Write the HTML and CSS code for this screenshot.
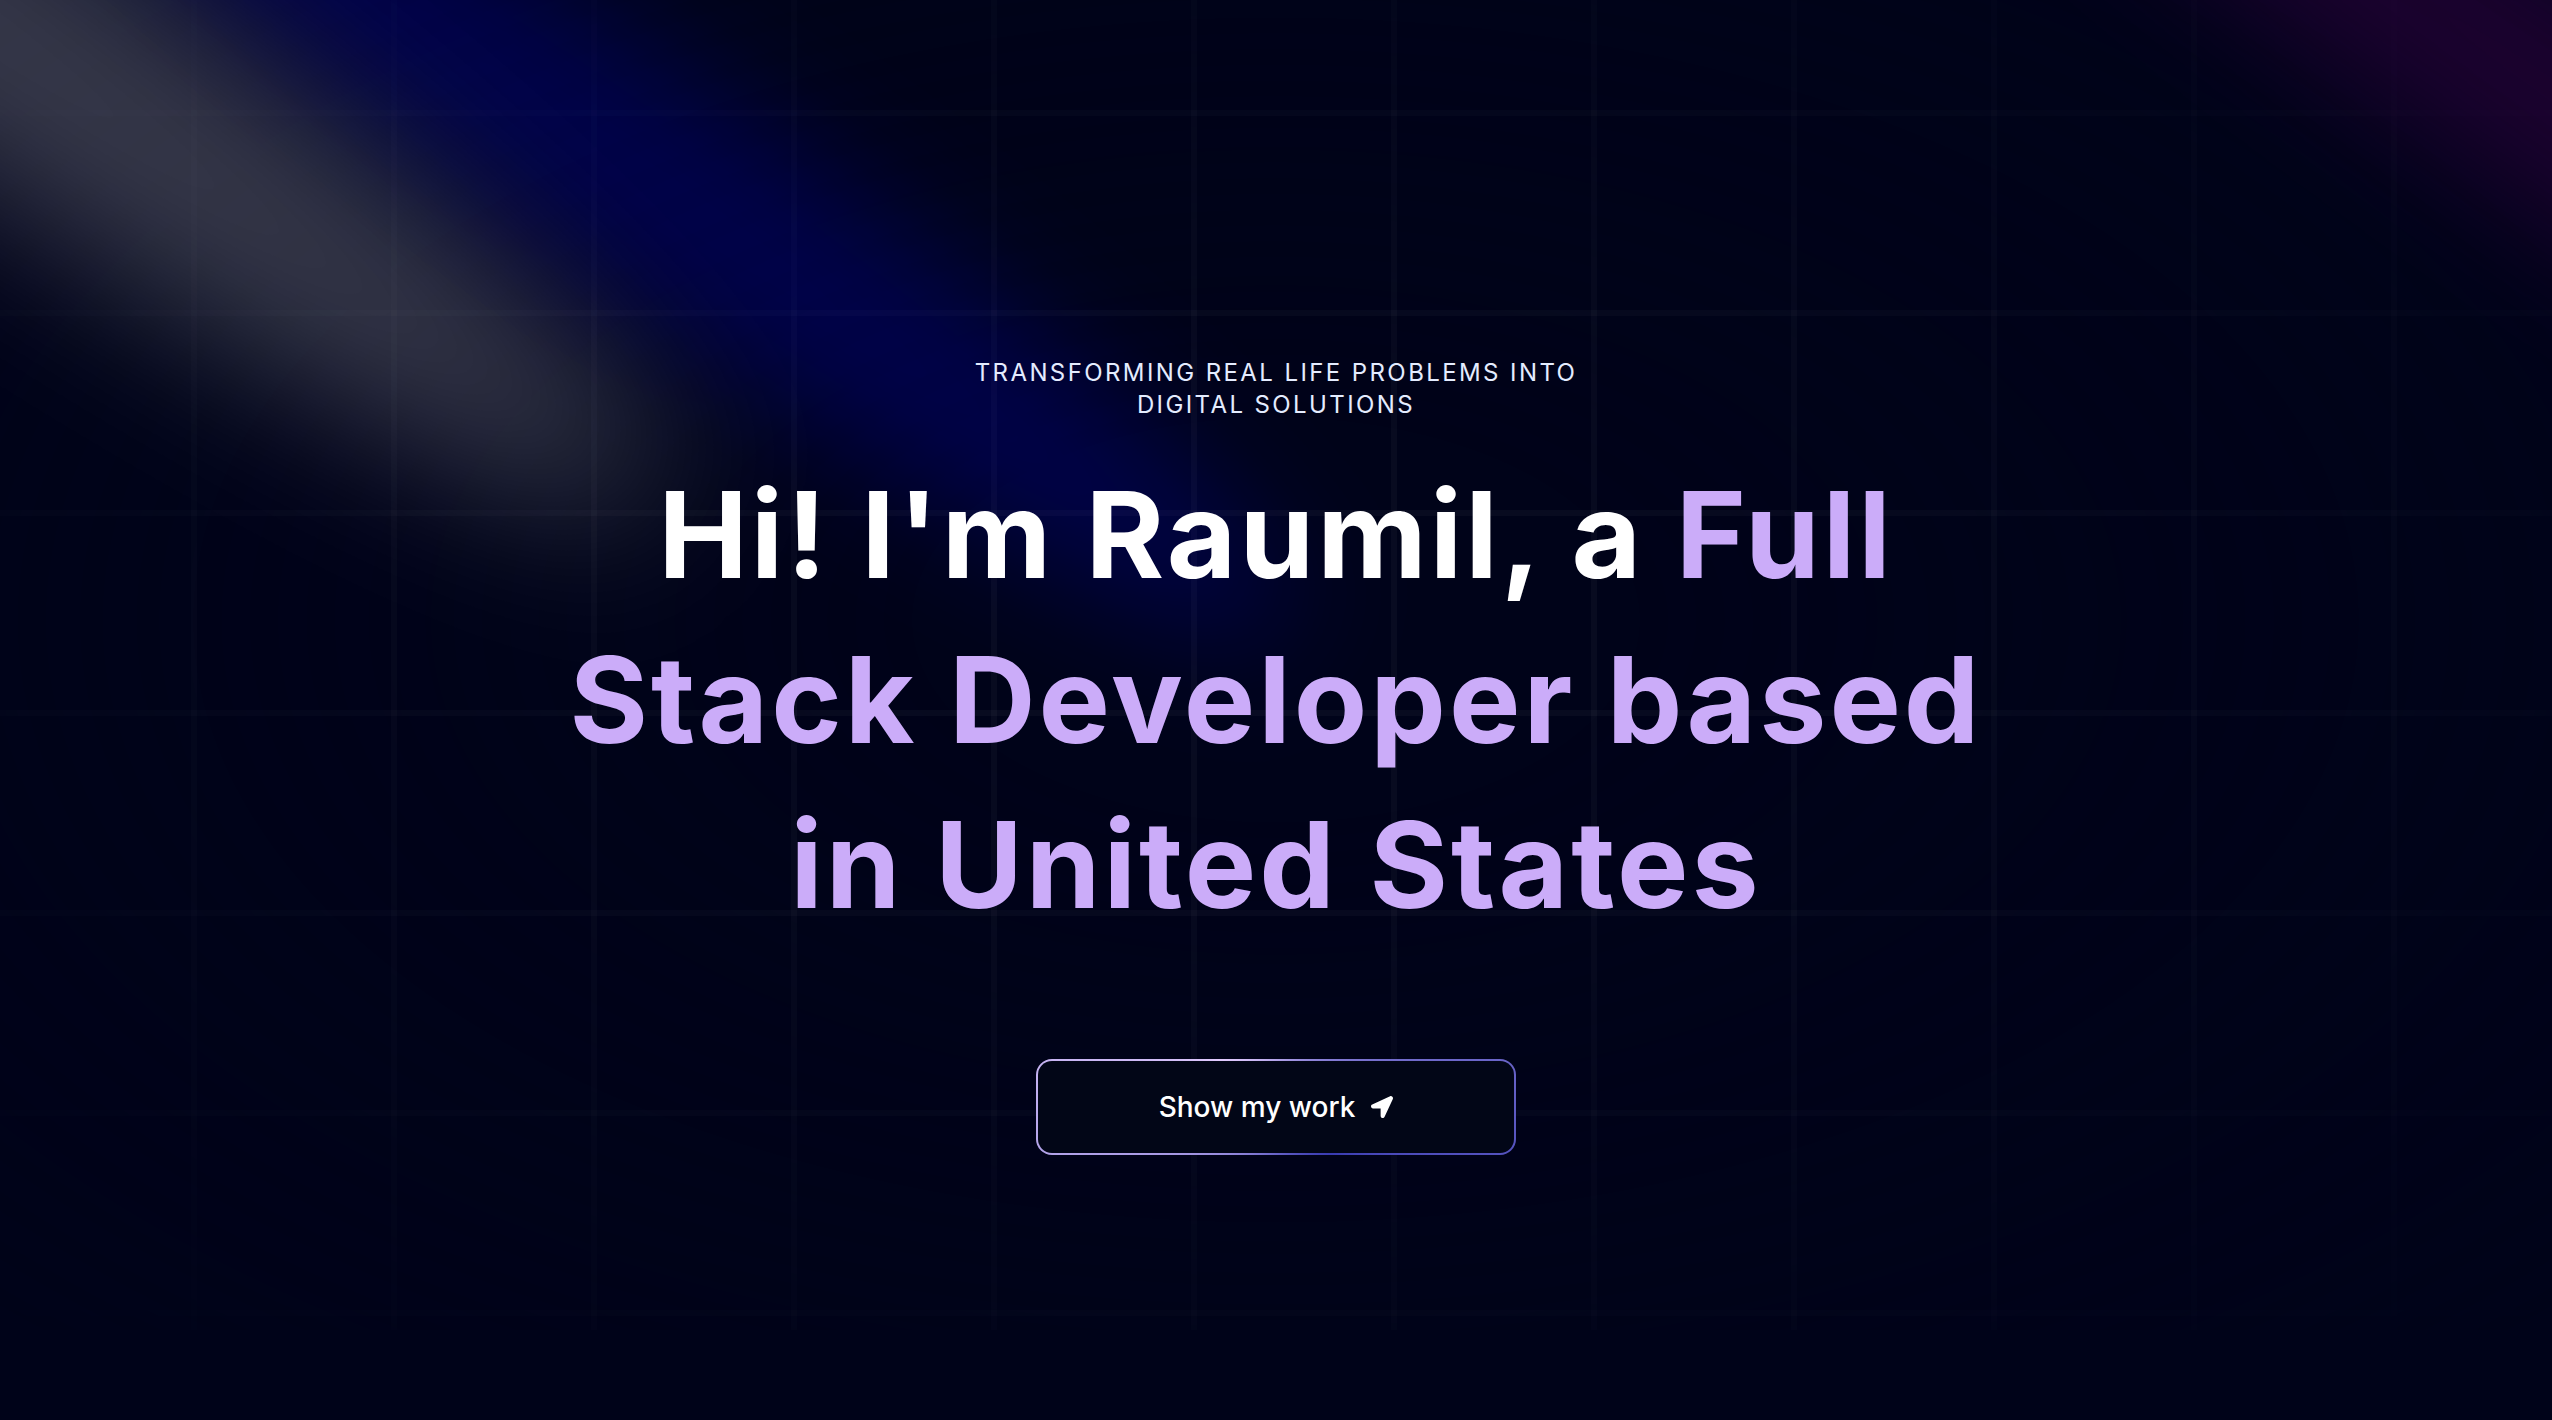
FILE: index.html
```html
<!DOCTYPE html>
<html lang="en">
<head>
    <meta charset="UTF-8">
    <meta name="viewport" content="width=device-width, initial-scale=1.0">
    <title>Raumil | Full Stack Developer</title>
    <link rel="stylesheet" href="styles.css">
</head>
<body>
    <main class="page">
        <div class="grid">
            <div class="grid-fade"></div>
        </div>

        <div class="spot spot-white"></div>
        <div class="spot spot-blue"></div>
        <div class="spot spot-purple"></div>

        <section class="hero">
            <p class="eyebrow">Transforming real life problems into digital solutions</p>
            <h1 class="title">
                <span class="word">Hi!</span>
                <span class="word">I'm</span>
                <span class="word">Raumil,</span>
                <span class="word">a</span>
                <span class="word accent">Full</span>
                <span class="word accent">Stack</span>
                <span class="word accent">Developer</span>
                <span class="word accent">based</span>
                <span class="word accent">in</span>
                <span class="word accent">United</span>
                <span class="word accent">States</span>
            </h1>
            <a href="#about" class="magic-btn">
                <span class="magic-inner">
                    Show my work
                    <svg class="magic-icon" viewBox="0 0 512 512" fill="currentColor" aria-hidden="true">
                        <path d="M444.52 3.52L28.74 195.42c-47.97 22.39-31.98 92.75 19.19 92.75h175.91v175.91c0 51.17 70.36 67.17 92.75 19.19l191.9-415.78c15.99-38.39-25.59-79.97-63.97-63.97z"/>
                    </svg>
                </span>
            </a>
        </section>
    </main>
</body>
</html>
```

FILE: styles.css
```css
body {
    margin: 0;
    background-color: #000319;
    font-family: Inter, "Noto Sans", sans-serif;
    color: #ffffff;
}

.page {
    position: relative;
    min-height: 100vh;
    overflow: hidden;
}

/* background grid, faded towards the edges */
.grid {
    position: absolute;
    left: 0;
    top: -90px;
    width: 100%;
    height: 1420px;
    background-color: #000319;
    background-image:
        linear-gradient(to right, transparent 194px, rgba(255, 255, 255, 0.03) 194px, rgba(255, 255, 255, 0.03) 200px),
        linear-gradient(to bottom, rgba(255, 255, 255, 0.03) 6px, transparent 6px);
    background-size: 200px 200px;
    background-position: -3px 0;
}

.grid-fade {
    position: absolute;
    inset: 0;
    background-color: #000319;
    -webkit-mask-image: radial-gradient(ellipse at center, transparent 20%, black);
    mask-image: radial-gradient(ellipse at center, transparent 20%, black);
}

/* spotlights */
.spot {
    position: absolute;
    z-index: 1;
    border-radius: 50%;
    transform: translate(-50%, -50%) rotate(35deg);
    pointer-events: none;
}

.spot-white {
    left: -127px;
    top: -51px;
    width: 1925px;
    height: 274px;
    background-color: rgba(255, 255, 255, 0.21);
    filter: blur(75px);
}

.spot-blue {
    left: 660px;
    top: 190px;
    width: 1540px;
    height: 218px;
    background-color: rgba(0, 0, 255, 0.21);
    filter: blur(60px);
}

.spot-purple {
    left: 2552px;
    top: 90px;
    width: 1540px;
    height: 218px;
    background-color: rgba(128, 0, 128, 0.21);
    filter: blur(60px);
}

/* hero */
.hero {
    position: relative;
    z-index: 10;
    display: flex;
    flex-direction: column;
    align-items: center;
    padding-top: 357px;
}

.eyebrow {
    max-width: 640px;
    margin: 0;
    font-size: 24px;
    line-height: 32px;
    letter-spacing: 0.1em;
    text-transform: uppercase;
    text-align: center;
    color: #e4ecff;
}

.title {
    max-width: 1531px;
    margin: 31px 0 0;
    font-size: 120px;
    line-height: 165px;
    font-weight: 700;
    letter-spacing: 0.025em;
    text-align: center;
    color: #ffffff;
}

.accent {
    color: #cbacf9;
}

.magic-btn {
    position: relative;
    display: inline-flex;
    width: 480px;
    height: 96px;
    margin-top: 112px;
    padding: 2px;
    border-radius: 16px;
    overflow: hidden;
    box-sizing: border-box;
    text-decoration: none;
    background: conic-gradient(from 310deg at 50% 50%, #e2cbff 0%, #393bb2 50%, #e2cbff 100%);
}

.magic-inner {
    display: inline-flex;
    align-items: center;
    justify-content: center;
    gap: 16px;
    width: 100%;
    height: 100%;
    border-radius: 14px;
    background-color: #020617;
    font-size: 28px;
    font-weight: 500;
    color: #ffffff;
}

.magic-icon {
    width: 22px;
    height: 22px;
}
```
